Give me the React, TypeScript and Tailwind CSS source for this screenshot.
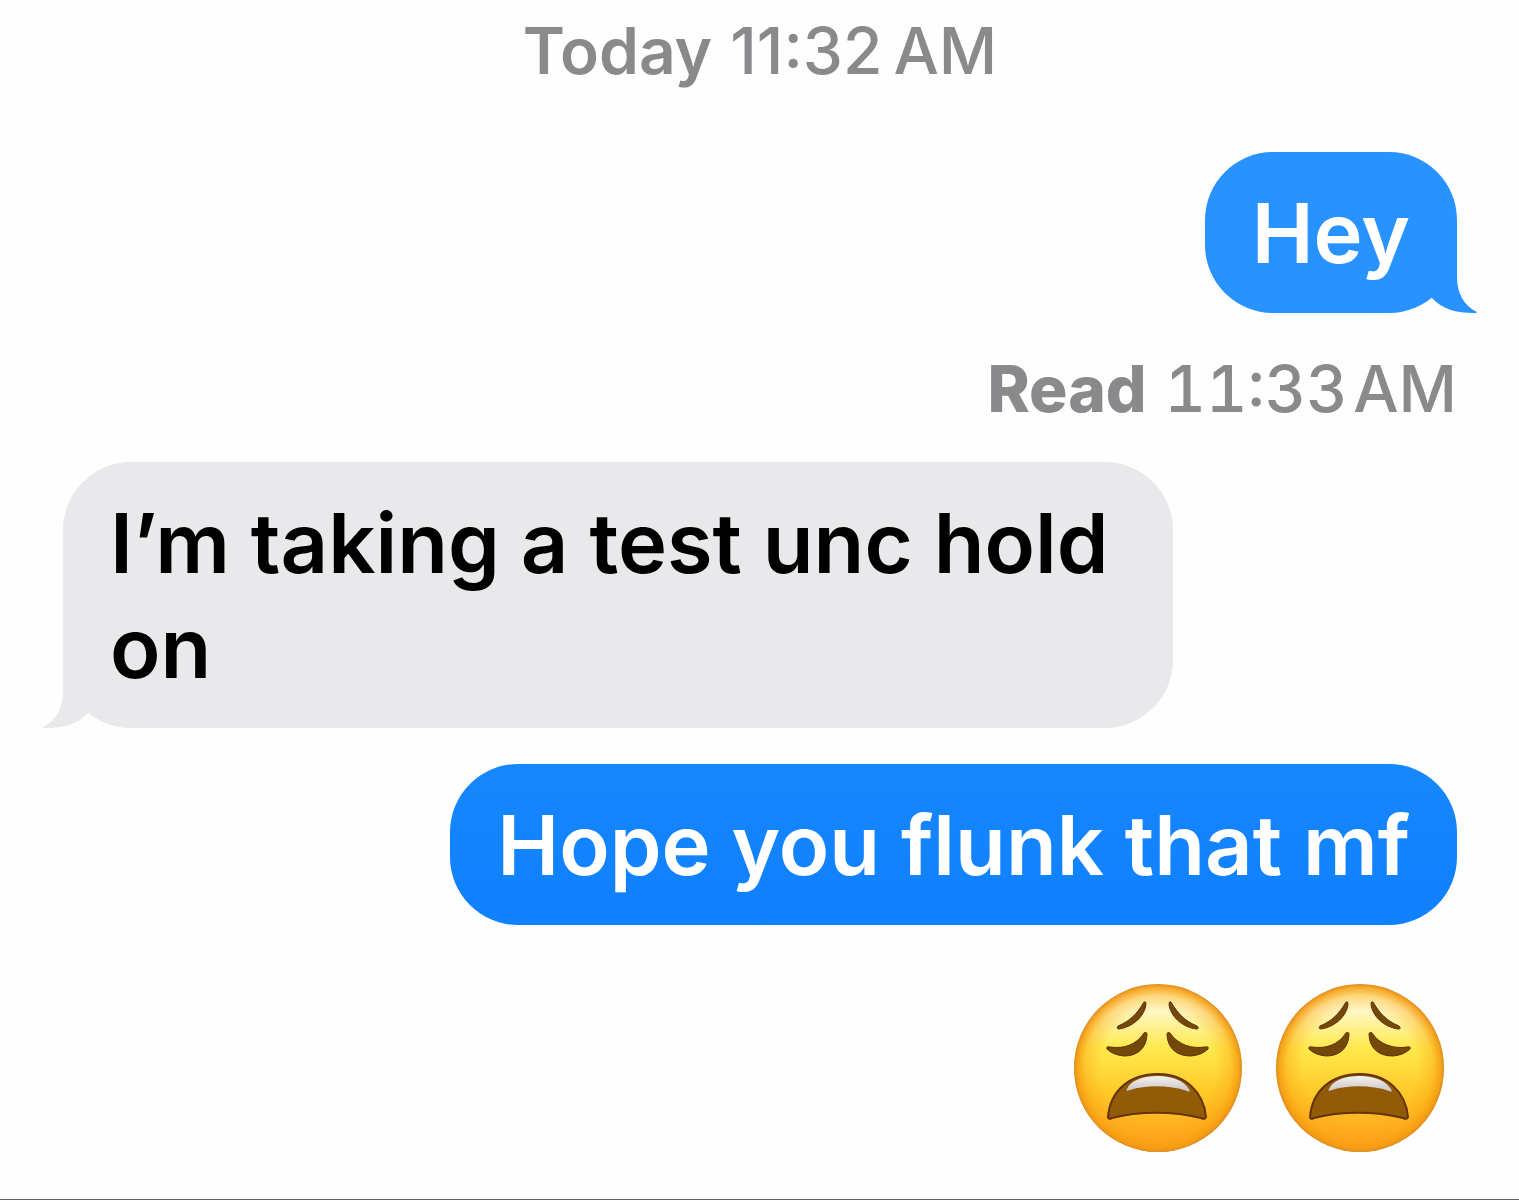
import React from 'react';

interface BubbleProps {
  sent?: boolean;
  tail?: boolean;
  className: string;
  children: React.ReactNode;
}

const Bubble: React.FC<BubbleProps> = ({ sent = false, tail = false, className, children }) => (
  <div
    className={`relative max-w-[1110px] rounded-[68px] px-[47px] pt-[29px] pb-[27px] text-[83px] leading-[105px] font-semibold ${
      sent ? 'self-end text-white' : 'self-start text-black'
    } ${className}`}
  >
    <p>{children}</p>
    {tail && (
      <svg
        className={`absolute bottom-0 h-20 w-[50px] ${sent ? '-right-5' : '-left-5 -scale-x-100'}`}
        viewBox="0 -20 50 80"
        fill="currentColor"
        aria-hidden="true"
      >
        <path
          className={sent ? 'text-[#2893fe]' : 'text-[#e9e9eb]'}
          d="M0 -20H30V24C30 40 37 53 50 59C50 60 49 60 47 60C29 60 15 56 5 45L0 40Z"
        />
      </svg>
    )}
  </div>
);

const WearyFace: React.FC<{ id: string }> = ({ id }) => (
  <svg className="size-[170px]" viewBox="0 0 170 170" role="img" aria-label="Weary face">
    <defs>
      <linearGradient id={`${id}-skin`} x1="0" y1="0" x2="0" y2="1">
        <stop offset="0" stopColor="#fff6b0" />
        <stop offset="0.16" stopColor="#fff8c4" />
        <stop offset="0.38" stopColor="#ffe94c" />
        <stop offset="0.65" stopColor="#ffc928" />
        <stop offset="1" stopColor="#ff9d1c" />
      </linearGradient>
      <radialGradient id={`${id}-edge`} cx="0.5" cy="0.5" r="0.5">
        <stop offset="0.68" stopColor="#f9a010" stopOpacity="0" />
        <stop offset="0.86" stopColor="#f9a010" stopOpacity="0.35" />
        <stop offset="0.96" stopColor="#f59c10" stopOpacity="0.85" />
        <stop offset="1" stopColor="#dc8d2c" />
      </radialGradient>
      <linearGradient id={`${id}-teeth`} x1="0" y1="0" x2="0" y2="1">
        <stop offset="0" stopColor="#f4f2f0" />
        <stop offset="1" stopColor="#c9c3c4" />
      </linearGradient>
    </defs>
    <circle cx="85" cy="85" r="84" fill={`url(#${id}-skin)`} />
    <circle cx="85" cy="85" r="84" fill={`url(#${id}-edge)`} />
    <g fill="#74480a" stroke="#5c3208" strokeWidth="1" strokeLinejoin="round">
      <path d="M71 19Q73 18 73 21C72 33 60 44 46 46Q43 46 45 43C57 38 64 31 71 19Z" />
      <path d="M98 19Q96 18 96 21C97 33 109 44 123 46Q127 46 124 43C112 38 105 31 98 19Z" />
      <path d="M71 50Q74 48 74 52C73 66 64 73 51 73Q40 72 34 66Q33 63 37 64C51 66 63 62 71 50Z" />
      <path d="M97 50Q94 48 94 52C95 66 104 73 118 73Q129 72 135 66Q136 63 132 64C119 66 105 62 97 50Z" />
    </g>
    <path
      d="M35 134C37 108 56 91 85 91C112 91 131 109 133 134Q132 137 128 135C100 128 66 128 39 135Q35 137 35 134Z"
      fill="#925b08"
      stroke="#63330d"
      strokeWidth="2"
    />
    <path d="M54 106C58 97 70 93 85 93C99 93 111 98 116 106Q118 110 114 108C97 102 73 102 57 107Q52 109 54 106Z" fill={`url(#${id}-teeth)`} />
  </svg>
);

const App: React.FC = () => (
  <main className="flex min-h-screen flex-col border-b border-[#606060] bg-[#fefefe] pr-[62px] pl-[63px] font-['Inter',sans-serif]">
    <div className="pt-[11px] text-center text-[64px] leading-[80px] text-[#8a8a8d]">
      <b className="font-semibold">Today</b> <time className="font-medium">11:32{'\u2009'}AM</time>
    </div>

    <Bubble sent tail className="mt-[61px] bg-[#2893fe]">Hey</Bubble>
    <div className="mt-9 self-end text-[64px] leading-[80px] text-[#8a8a8d]">
      <b className="font-extrabold">Read</b> <time className="font-medium tabular-nums">11:33{'\u200a'}AM</time>
    </div>

    <Bubble tail className="mt-[33px] bg-[#e9e9eb]">I’m taking a test unc hold on</Bubble>

    <Bubble sent className="mt-9 bg-linear-to-b from-[#1787fd] to-[#0f80ff]">Hope you flunk that mf</Bubble>

    <div className="mt-[58px] flex gap-8 self-end pr-3">
      <WearyFace id="first" />
      <WearyFace id="second" />
    </div>
  </main>
);

export default App;
